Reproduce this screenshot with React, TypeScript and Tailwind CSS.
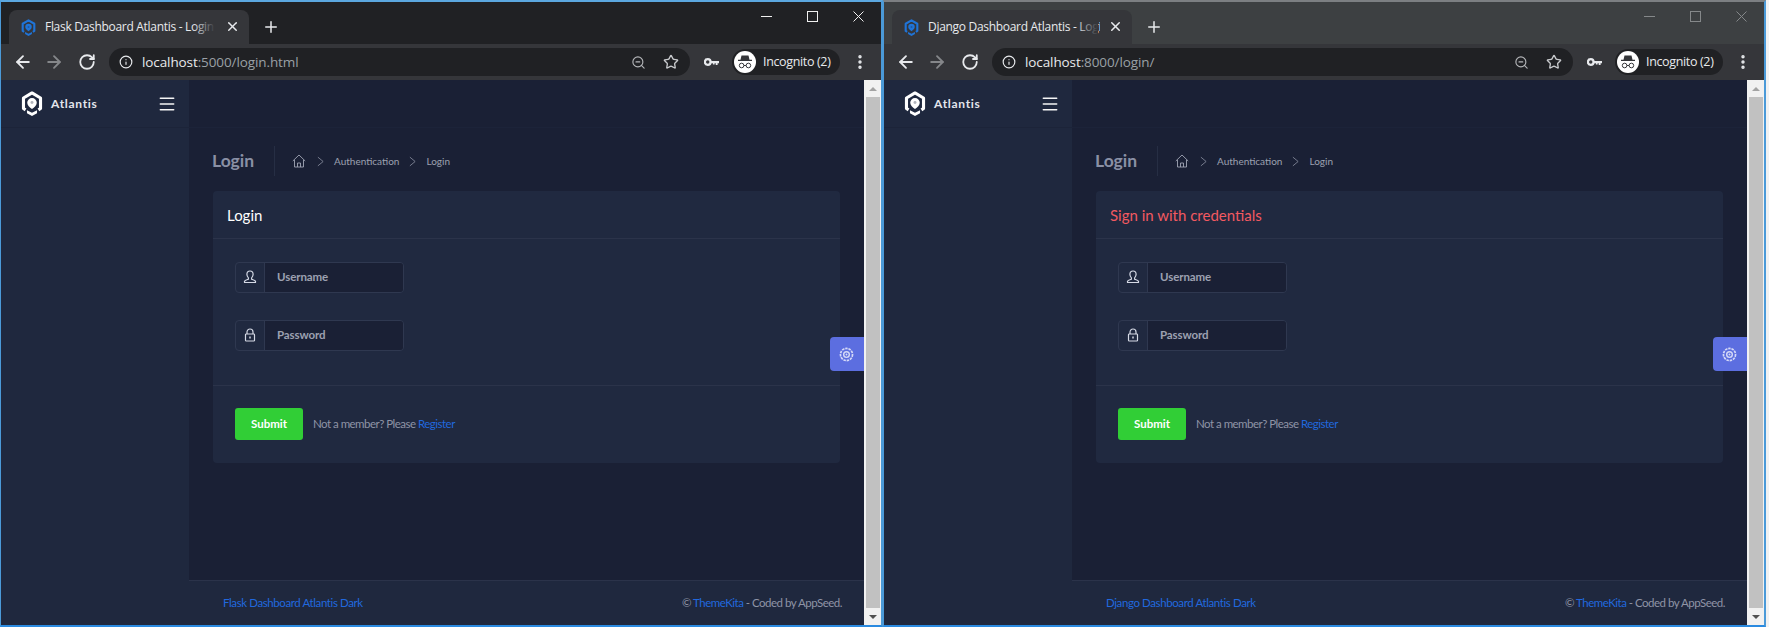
import { ArrowLeft, ArrowRight, Info, Menu, MoreVertical, Plus, RotateCw, Star, X, ZoomOut } from "lucide-react";

function Logo({ className, color }: { className: string; color: string }) {
  return (
    <svg viewBox="0 0 24 27" className={className}>
      <path fill="none" stroke={color} strokeWidth="3.4" strokeLinejoin="round" d="M5 20.500 2.700 19V7.500L12 2l9.300 5.500V19L19 20.500" />
      <path fill={color} d="M12 7.500a5.200 5.200 0 0 1 5.200 5.200c0 2.800-2.600 5-5.200 6.800-2.600-1.800-5.200-4-5.200-6.800A5.200 5.200 0 0 1 12 7.500z" />
      <circle cx="12" cy="12.500" r="1.600" fill="#1f283e" opacity="0.35" />
      <path fill={color} d="m6.500 20.800 5.500 2.700 5.500-2.700V24L12 27l-5.500-3z" />
    </svg>
  );
}

function Incognito() {
  return (
    <svg viewBox="0 0 22 22" className="h-[22px] w-[22px] shrink-0">
      <circle cx="11" cy="11" r="11" fill="#fff" />
      <path fill="#35363a" d="M7.500 4.500h7l1 4.200H18v1.300H4V8.700h2.500z" />
      <circle cx="7.600" cy="14.500" r="2.300" fill="none" stroke="#35363a" strokeWidth="1" />
      <circle cx="14.400" cy="14.500" r="2.300" fill="none" stroke="#35363a" strokeWidth="1" />
      <path stroke="#35363a" strokeWidth="1" d="M9.900 14.500h2.200" />
    </svg>
  );
}

function KeyIcon() {
  return (
    <svg viewBox="0 0 16 10" className="h-[10px] w-[15px]">
      <circle cx="4" cy="5" r="3" fill="none" stroke="#e8eaed" strokeWidth="2.400" />
      <path fill="#e8eaed" d="M7 3.800h9v2.400h-1.500v2h-2v-2h-1.200v1.400H9.500V6.200H7z" />
    </svg>
  );
}

function Gear() {
  return (
    <svg viewBox="0 0 18 18" className="h-[17px] w-[17px]" fill="none" stroke="#d5d9f7">
      <circle cx="9" cy="9" r="6.400" strokeWidth="1.800" strokeDasharray="2.600 0.900" />
      <circle cx="9" cy="9" r="3" strokeWidth="1.500" />
      <circle cx="9" cy="9" r="1" fill="#d5d9f7" stroke="none" />
    </svg>
  );
}

function UserLine() {
  return (
    <svg viewBox="0 0 14 14" className="h-[14px] w-[14px]" fill="none" stroke="currentColor" strokeWidth="1.200" strokeLinejoin="round">
      <path d="M7 1c2 0 3.100 1.400 3.100 3.200 0 1.500-.7 2.800-1.500 3.600v1.400c1.300.5 3.400 1 3.900 2.100v1.200H1.500v-1.200c.5-1.100 2.600-1.600 3.900-2.100V7.800C4.600 7 3.900 5.700 3.900 4.200 3.900 2.400 5 1 7 1z" />
    </svg>
  );
}

function LockLine() {
  return (
    <svg viewBox="0 0 14 14" className="h-[14px] w-[14px]" fill="none" stroke="currentColor" strokeWidth="1.200">
      <path d="M4 6V4a3 3 0 0 1 6 0v2" />
      <rect x="2.500" y="6" width="9" height="7" rx="0.800" />
      <path strokeWidth="1.500" d="M7 8.500v2" />
    </svg>
  );
}

function HomeLine() {
  return (
    <svg viewBox="0 0 14 14" className="h-[14px] w-[14px]" fill="none" stroke="#a2a6b5" strokeWidth="0.900" strokeLinejoin="round">
      <path d="M.8 7 7 1l6.200 6" />
      <path d="M2.500 6v7h9V6" />
      <path d="M5.500 13V9h3v4" />
    </svg>
  );
}

function Sep() {
  return (
    <svg viewBox="0 0 8 12" className="h-[11px] w-[7px]" fill="none" stroke="#8d92a3" strokeWidth="0.900">
      <path d="m1 1 6 5-6 5" />
    </svg>
  );
}

function Field({ label, icon }: { label: string; icon: React.ReactNode }) {
  return (
    <div className="flex h-[31px] w-[169px] overflow-hidden rounded-[4px] border border-[#2f3850]">
      <div className="flex w-[29px] shrink-0 items-center justify-center border-r border-[#2f3850] pb-[2px] text-[#d5d9e5]">{icon}</div>
      <div className="flex flex-1 items-center bg-[#1a2035] pb-[2px] pl-[12px] text-[11.500px] font-bold tracking-[-0.1px] text-[#9da1b1]">{label}</div>
    </div>
  );
}

function BrowserWindow({
  active,
  tabTitle,
  port,
  path,
  cardTitle,
  cardTitleClass,
  footerName,
}: {
  active: boolean;
  tabTitle: string;
  port: string;
  path: string;
  cardTitle: string;
  cardTitleClass: string;
  footerName: string;
}) {
  return (
    <div className={`flex h-[627px] w-[883px] shrink-0 flex-col border-b-[2px] border-l border-r-[2px] border-t-[2px] border-x-[#4b9ad8] border-b-[#2a8ae0] ${active ? "border-t-[#5ba7e0]" : "border-t-[#7c7f82]"}`}>
      {/* tab strip */}
      <div className={`flex h-[42px] shrink-0 items-end pl-[8px] ${active ? "bg-[#202124]" : "bg-[#3d4042]"}`}>
        <div className="relative flex h-[34px] w-[240px] items-center rounded-t-[8px] bg-[#35363a] pl-[12px] font-['Open_Sans',sans-serif] text-[12px] text-[#e8eaed]">
          <Logo className="h-[17px] w-[15px] shrink-0" color="#1f74d8" />
          <span className="ml-[9px] w-[172px] overflow-hidden whitespace-nowrap tracking-[-0.3px]">{tabTitle}</span>
          <div className="absolute left-[184px] top-0 h-full w-[22px] bg-gradient-to-r from-transparent to-[#35363a]" />
          <X size={15} strokeWidth={2.400} className="absolute left-[216px] top-[9px]" />
        </div>
        <Plus size={18} strokeWidth={2} color="#e8eaed" className="mb-[8px] ml-[13px]" />
        <div className={`mb-[22px] ml-auto flex items-center gap-[35px] pr-[17px] ${active ? "text-[#f0f0f0]" : "text-[#85888a]"}`}>
          <svg width="11" height="11" viewBox="0 0 11 11"><path d="M0 5.500h11" stroke="currentColor" /></svg>
          <svg width="11" height="11" viewBox="0 0 11 11"><rect x=".5" y=".5" width="10" height="10" fill="none" stroke="currentColor" /></svg>
          <svg width="11" height="11" viewBox="0 0 11 11"><path d="M.5.500l10 10M10.500.500l-10 10" stroke="currentColor" /></svg>
        </div>
      </div>
      {/* toolbar */}
      <div className="flex h-[36px] shrink-0 items-center bg-[#35363a] pl-[12px] font-['Open_Sans',sans-serif]">
        <ArrowLeft size={20} strokeWidth={2.200} color="#e8eaed" />
        <ArrowRight size={20} strokeWidth={2.200} color="#85878a" className="ml-[11px]" />
        <RotateCw size={18} strokeWidth={2.400} color="#e8eaed" className="ml-[14px]" />
        <div className="ml-[13px] flex h-[28px] flex-1 items-center rounded-full bg-[#202124] pl-[10px] pr-[11px]">
          <Info size={14} strokeWidth={2} color="#e8eaed" />
          <span className="ml-[9px] text-[13.500px] tracking-[-0.1px] text-[#e8eaed]">localhost</span>
          <span className="text-[13.500px] tracking-[-0.1px] text-[#9aa0a6]">
            :{port}
            {path}
          </span>
          <ZoomOut size={15} strokeWidth={1.800} color="#b5b7ba" className="ml-auto" />
          <Star size={16} strokeWidth={2} color="#c8cacd" className="ml-[17px]" />
        </div>
        <div className="ml-[14px]">
          <KeyIcon />
        </div>
        <div className="ml-[13px] flex h-[26px] w-[108px] items-center rounded-full bg-[#202124] pl-[2px]">
          <Incognito />
          <span className="ml-[7px] whitespace-nowrap text-[12.500px] tracking-[-0.35px] text-[#e8eaed]">Incognito (2)</span>
        </div>
        <MoreVertical size={18} strokeWidth={2.600} color="#e8eaed" className="ml-[11px] mr-[12px]" />
      </div>
      {/* page */}
      <div className="flex min-h-0 flex-1">
        <div className="relative flex min-w-0 flex-1 font-['Lato',sans-serif]">
          <div className="w-[188px] shrink-0 bg-[#1f283e]">
            <div className="flex h-[48px] items-center border-b border-[#1c2439] pl-[20px] pr-[12px]">
              <Logo className="h-[25px] w-[22px]" color="#ffffff" />
              <span className="ml-[8px] text-[12px] font-bold tracking-[0.7px] text-[#e4e6ec]">Atlantis</span>
              <Menu size={20} strokeWidth={1.800} color="#f5f5f5" className="ml-auto" />
            </div>
          </div>
          <div className="flex min-w-0 flex-1 flex-col bg-[#1a2035]">
            <div className="h-[48px] shrink-0 border-b border-[#1c2339]" />
            <div className="flex-1 px-[24px] pt-[18px]">
              <div className="flex h-[30px] items-center">
                <h1 className="-ml-px w-[43px] text-[17.500px] font-bold leading-none text-[#8a90a5]">Login</h1>
                <div className="ml-[19px] h-[30px] w-px bg-[#262e44]" />
                <div className="ml-[17px]">
                  <HomeLine />
                </div>
                <div className="ml-[11px]">
                  <Sep />
                </div>
                <span className="ml-[10px] text-[10px] text-[#9ca0b0]">Authentication</span>
                <div className="ml-[10px]">
                  <Sep />
                </div>
                <span className="ml-[10px] text-[10px] text-[#9ca0b0]">Login</span>
              </div>
              <div className="mt-[15px] h-[272px] rounded-[4px] bg-[#202940]">
                <div className={`flex h-[48px] items-center border-b border-[#2b334a] pl-[14px] pt-[2px] text-[15px] ${cardTitleClass}`}>{cardTitle}</div>
                <div className="flex h-[147px] flex-col gap-[27px] border-b border-[#2b334a] pl-[22px] pt-[23px]">
                  <Field label="Username" icon={<UserLine />} />
                  <Field label="Password" icon={<LockLine />} />
                </div>
                <div className="flex items-center pl-[22px] pt-[22px]">
                  <div className="flex h-[32px] w-[68px] items-center justify-center rounded-[3px] bg-[#31ce36] text-[11.500px] font-bold text-white">Submit</div>
                  <span className="ml-[10px] text-[11.500px] tracking-[-0.52px] text-[#8f94a6]">
                    Not a member? Please <span className="text-[#2168de]">Register</span>
                  </span>
                </div>
              </div>
            </div>
            <div className="flex h-[45px] shrink-0 items-center justify-between border-t border-[#2b334a] bg-[#1f283e] pl-[34px] pr-[22px] text-[11.500px] tracking-[-0.4px]">
              <span className="text-[#2168de]">{footerName}</span>
              <span className="tracking-[-0.5px] text-[#8f94a6]">
                © <span className="text-[#2168de]">ThemeKita</span> - Coded by AppSeed.
              </span>
            </div>
          </div>
          <div className="absolute right-0 top-[257px] flex h-[34px] w-[34px] items-center justify-center rounded-l-[4px] bg-[#5c6ee0] pr-[2px]">
            <Gear />
          </div>
        </div>
        {/* scrollbar */}
        <div className="flex w-[17px] shrink-0 flex-col items-center bg-[#f1f1f1]">
          <div className="flex h-[17px] items-center justify-center">
            <div className="h-0 w-0 border-x-[4px] border-b-[4px] border-x-transparent border-b-[#a3a3a3]" />
          </div>
          <div className="w-[14px] flex-1 bg-[#c1c1c1]" />
          <div className="flex h-[17px] items-center justify-center">
            <div className="h-0 w-0 border-x-[4px] border-t-[4px] border-x-transparent border-t-[#505050]" />
          </div>
        </div>
      </div>
    </div>
  );
}

export default function App() {
  return (
    <div className="flex h-[627px] w-[1769px] overflow-hidden bg-[#f2f2f2]">
      <BrowserWindow
        active
        tabTitle="Flask Dashboard Atlantis - Login"
        port="5000"
        path="/login.html"
        cardTitle="Login"
        cardTitleClass="text-white"
        footerName="Flask Dashboard Atlantis Dark"
      />
      <BrowserWindow
        active={false}
        tabTitle="Django Dashboard Atlantis - Login"
        port="8000"
        path="/login/"
        cardTitle="Sign in with credentials"
        cardTitleClass="text-[#f25961]"
        footerName="Django Dashboard Atlantis Dark"
      />
    </div>
  );
}
